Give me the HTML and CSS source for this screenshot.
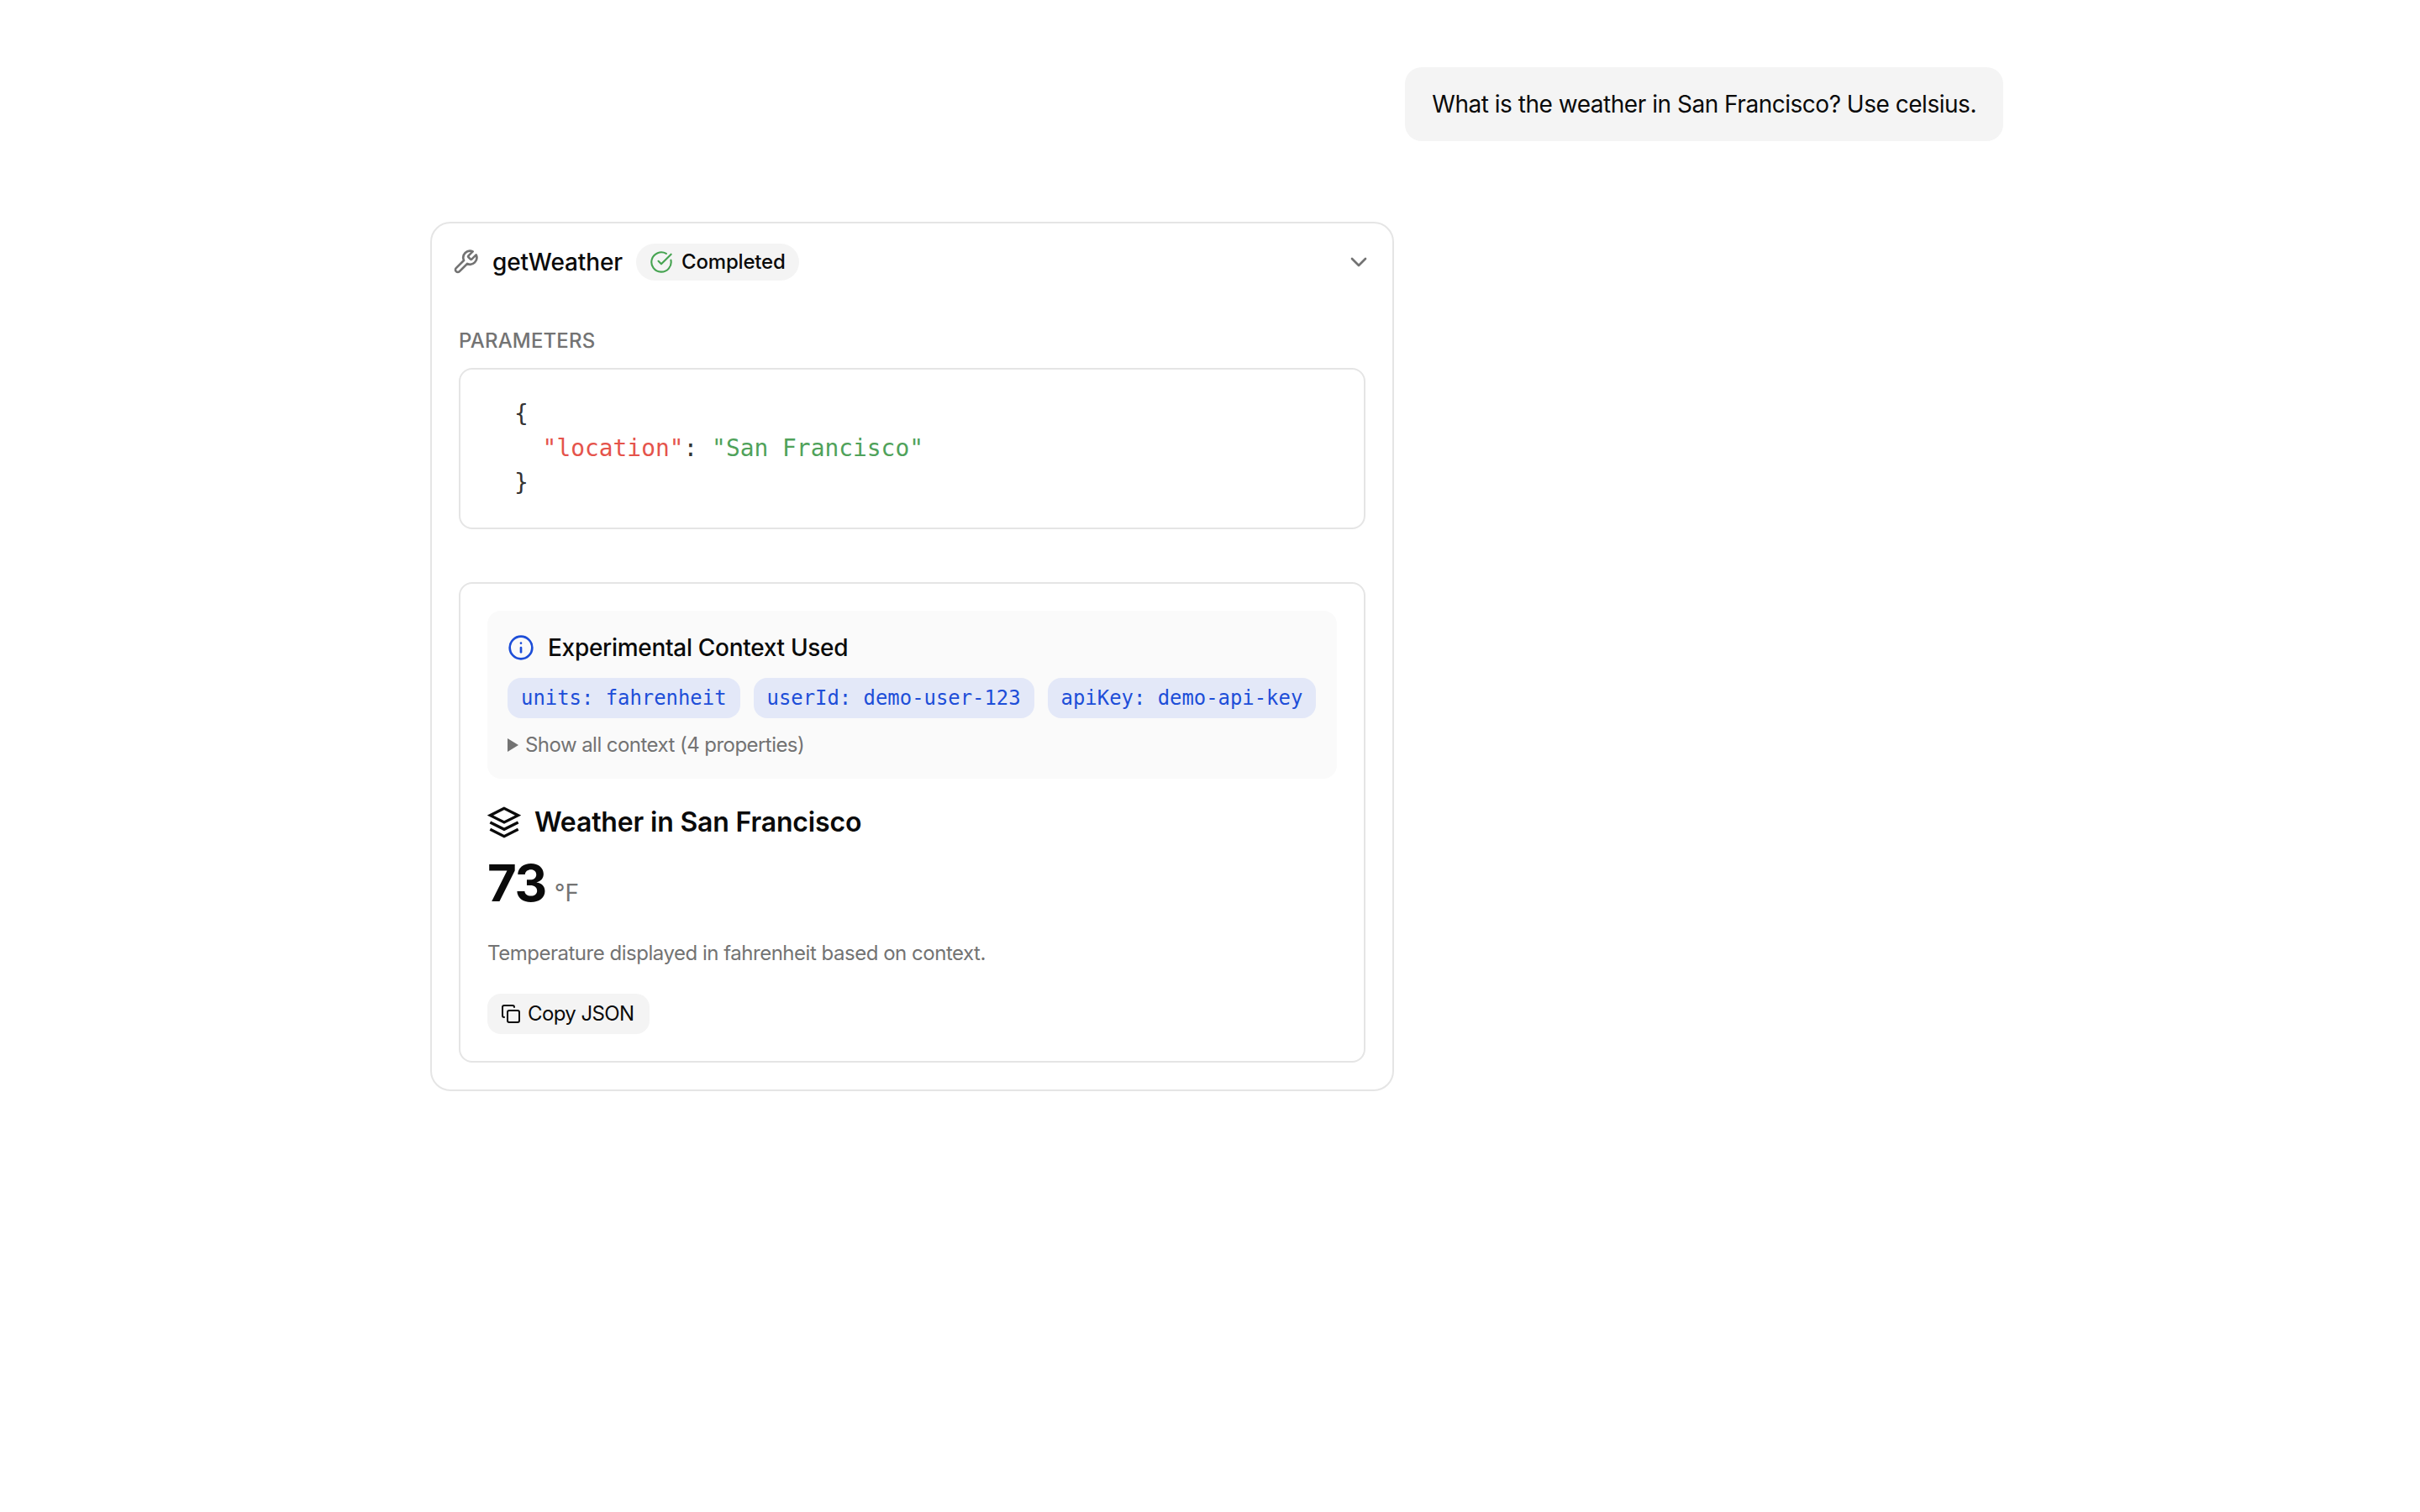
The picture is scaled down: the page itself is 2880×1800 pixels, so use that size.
FILE: index.html
```html
<!DOCTYPE html>
<html lang="en">
<head>
<meta charset="utf-8">
<title>getWeather</title>
<link rel="stylesheet" href="styles.css">
</head>
<body>
<main class="thread">
  <div class="user-row"><div class="bubble">What is the weather in San Francisco? Use celsius.</div></div>
  <section class="tool">
    <header class="tool-head">
      <svg class="ic32 gray" viewBox="0 0 24 24"><path d="M14.7 6.3a1 1 0 0 0 0 1.4l1.6 1.6a1 1 0 0 0 1.4 0l3.77-3.77a6 6 0 0 1-7.94 7.94l-6.91 6.91a2.12 2.12 0 0 1-3-3l6.91-6.91a6 6 0 0 1 7.94-7.94l-3.76 3.76z"/></svg>
      <span class="tool-name">getWeather</span>
      <span class="badge">
        <svg class="ic28 green" viewBox="0 0 24 24"><path d="M21.801 10A10 10 0 1 1 17 3.335"/><path d="m9 11 3 3L22 4"/></svg>
        <span class="badge-text">Completed</span>
      </span>
      <svg class="ic32 gray chev" viewBox="0 0 24 24"><path d="m6 9 6 6 6-6"/></svg>
    </header>
    <div class="params">
      <div class="label">PARAMETERS</div>
      <pre class="code">{
  <span class="k">"location"</span>: <span class="s">"San Francisco"</span>
}</pre>
    </div>
    <div class="result">
      <div class="context">
        <div class="ctx-title">
          <svg class="ic32 blue" viewBox="0 0 24 24"><circle cx="12" cy="12" r="10"/><path d="M12 16v-4"/><path d="M12 8h.01"/></svg>
          <span class="ctx-text">Experimental Context Used</span>
        </div>
        <div class="chips">
          <span class="chip">units: fahrenheit</span>
          <span class="chip">userId: demo-user-123</span>
          <span class="chip">apiKey: demo-api-key</span>
        </div>
        <div class="show"><span class="tri"></span><span class="show-text">Show all context (4 properties)</span></div>
      </div>
      <div class="wx-title">
        <svg class="ic40" viewBox="0 0 24 24"><path d="M12 2 2 7l10 5 10-5z"/><path d="m2 17 10 5 10-5"/><path d="m2 12 10 5 10-5"/></svg>
        <span class="wx-text">Weather in San Francisco</span>
      </div>
      <div class="temp"><span class="num">73</span><span class="unit">°F</span></div>
      <p class="desc">Temperature displayed in fahrenheit based on context.</p>
      <button class="copy">
        <svg class="ic24" viewBox="0 0 24 24"><rect x="8" y="8" width="14" height="14" rx="2" ry="2"/><path d="M4 16c-1.1 0-2-.9-2-2V4c0-1.1.9-2 2-2h10c1.1 0 2 .9 2 2"/></svg>
        <span class="copy-text">Copy JSON</span>
      </button>
    </div>
  </section>
</main>
</body>
</html>
```
FILE: styles.css
```css
* { box-sizing: border-box; }
html, body { margin: 0; background: #fff; }
body { font-family: Inter, "Liberation Sans", sans-serif; color: #0a0a0a; min-height: 1800px; }
svg { fill: none; stroke: currentColor; stroke-width: 2; stroke-linecap: round; stroke-linejoin: round; flex: none; display: block; }
.ic24 { width: 24px; height: 24px; }
.ic28 { width: 28px; height: 28px; stroke-width: 1.8; }
.ic32 { width: 32px; height: 32px; }
.ic40 { width: 40px; height: 40px; stroke-linecap: butt; stroke-linejoin: miter; }
.gray { color: #737373; }
.green { color: #45a350; }
.blue { color: #1d4ed8; }

.thread { padding: 80px 496px 0 512px; display: flex; flex-direction: column; gap: 96px; }
.user-row { display: flex; justify-content: flex-end; }
.bubble { background: #f4f4f4; border-radius: 20px; padding: 20px 32px; font-size: 28px; line-height: 48px; height: 88px; letter-spacing: -0.48px; }

.tool { width: 1147px; border: 2px solid #e5e5e5; border-radius: 24px; padding-bottom: 32px; }
.tool-head { display: flex; align-items: center; gap: 16px; padding: 24px; }
.tool-name { font-size: 28px; font-weight: 500; line-height: 40px; letter-spacing: -0.1px; }
.badge { display: flex; align-items: center; gap: 10px; height: 44px; padding: 0 16px; border-radius: 22px; background: #f4f4f4; }
.badge-text { font-size: 24px; font-weight: 500; line-height: 32px; letter-spacing: -0.2px; }
.chev { margin-left: auto; }

.params { padding: 32px 32px 0; }
.label { font-size: 24px; font-weight: 500; line-height: 32px; color: #737373; margin-bottom: 16px; letter-spacing: 0.17px; }
.code { margin: 0; border: 2px solid #e5e5e5; border-radius: 16px; padding: 32px 64px; font-family: "DejaVu Sans Mono", monospace; font-size: 27.9px; line-height: 41px; color: #333; height: 192px; }
.k { color: #e5534b; }
.s { color: #4fa25a; }

.result { margin: 63px 32px 0; border: 2px solid #e5e5e5; border-radius: 16px; padding: 32px; }
.context { background: #fafafa; border-radius: 16px; padding: 24px; height: 200px; }
.ctx-title { display: flex; align-items: center; gap: 16px; height: 40px; }
.ctx-text { font-size: 28px; font-weight: 500; line-height: 40px; letter-spacing: -0.3px; }
.chips { display: flex; gap: 16px; margin-top: 16px; }
.chip { flex: none; white-space: nowrap; height: 48px; padding: 8px 16px; border-radius: 16px; background: #e3e8f8; color: #1d4ed8; font-family: "DejaVu Sans Mono", monospace; font-size: 23.9px; line-height: 32px; }
.show { display: flex; align-items: center; gap: 8px; margin-top: 16px; height: 32px; color: #737373; }
.tri { width: 0; height: 0; border-left: 13px solid #737373; border-top: 8px solid transparent; border-bottom: 8px solid transparent; }
.show-text { font-size: 24px; line-height: 32px; letter-spacing: -0.55px; }

.wx-title { display: flex; align-items: center; gap: 16px; margin-top: 32px; height: 40px; }
.wx-text { font-size: 32px; font-weight: 600; line-height: 40px; letter-spacing: -0.17px; }
.temp { display: flex; align-items: baseline; gap: 10px; margin-top: 16px; height: 72px; }
.num { font-size: 60px; font-weight: 700; line-height: 72px; letter-spacing: -1.5px; }
.unit { font-size: 28px; color: #737373; }
.desc { margin: 32px 0 0; font-size: 24px; line-height: 32px; color: #737373; letter-spacing: -0.48px; }
.copy { display: inline-flex; align-items: center; gap: 8px; margin-top: 32px; height: 48px; padding: 0 18px 0 16px; border: 0; border-radius: 16px; background: #f4f4f4; color: #0a0a0a; font-family: inherit; }
.copy-text { font-size: 24px; font-weight: 400; line-height: 32px; letter-spacing: -0.6px; }
```
